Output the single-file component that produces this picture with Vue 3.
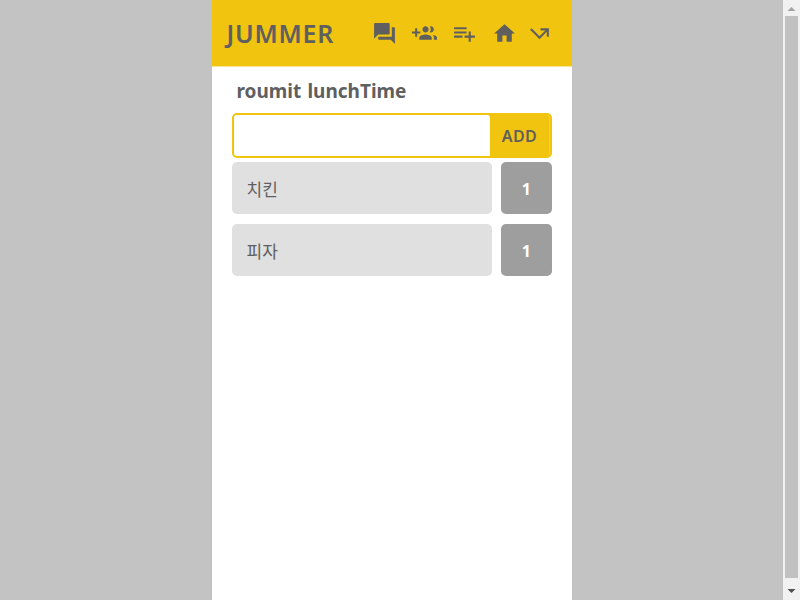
<script setup>
import { ref } from 'vue'

const draft = ref('')
const menus = ref([
  { name: '치킨', votes: 1 },
  { name: '피자', votes: 1 },
])

const actions = [
  { label: 'chat', path: 'M21 6h-2v9H6v2c0 .55.45 1 1 1h11l4 4V7c0-.55-.45-1-1-1zm-4 6V3c0-.55-.45-1-1-1H3c-.55 0-1 .45-1 1v14l4-4h10c.55 0 1-.45 1-1z' },
  { label: 'invite', path: 'M8 10H5V7H3v3H0v2h3v3h2v-3h3v-2zm10 1c1.66 0 2.99-1.34 2.99-3S19.66 5 18 5c-.32 0-.63.05-.91.14.57.81.9 1.79.9 2.86s-.34 2.04-.9 2.86c.28.09.59.14.91.14zm-5 0c1.66 0 2.99-1.34 2.99-3S14.66 5 13 5c-1.66 0-3 1.34-3 3s1.34 3 3 3zm6.62 2.16c.83.73 1.38 1.66 1.38 2.84v2h3v-2c0-1.54-2.37-2.49-4.38-2.84zM13 13c-2 0-6 1-6 3v2h12v-2c0-2-4-3-6-3z' },
  { label: 'new list', path: 'M14 10H2v2h12v-2zm0-4H2v2h12V6zm4 8v-4h-2v4h-4v2h4v4h2v-4h4v-2h-4zM2 16h8v-2H2v2z' },
  { label: 'home', path: 'M10 20v-6h4v6h5v-8h3L12 3 2 12h3v8z' },
  { label: 'leave', path: 'M3 8.41l9 9 7-7V15h2V7h-8v2h4.59L12 14.59 4.41 7 3 8.41z' },
]

function addMenu() {
  const name = draft.value.trim()
  if (!name) return
  menus.value.push({ name, votes: 0 })
  draft.value = ''
}
</script>

<template>
  <div class="page">
    <div class="stage">
      <main class="phone">
        <header class="bar">
          <h1 class="brand">JUMMER</h1>
          <nav class="actions">
            <a v-for="a in actions" :key="a.label" class="action">
              <svg viewBox="0 0 24 24" width="25" height="25"><path :d="a.path" /></svg>
            </a>
          </nav>
        </header>
        <section class="room">
          <h2 class="title">roumit lunchTime</h2>
          <form class="entry" @submit.prevent="addMenu">
            <input v-model="draft" class="field" type="text" />
            <button class="add" type="submit">ADD</button>
          </form>
          <ul class="menus">
            <li v-for="m in menus" :key="m.name" class="menu">
              <span class="name">{{ m.name }}</span>
              <button class="votes" type="button" @click="m.votes++">{{ m.votes }}</button>
            </li>
          </ul>
        </section>
      </main>
    </div>
    <div class="scroll">
      <svg class="arrow" viewBox="0 0 17 16" width="17" height="16"><path fill="#a3a3a3" d="M4.5 11 8.5 7l4 4z" /></svg>
      <div class="thumb"></div>
      <svg class="arrow end" viewBox="0 0 17 22" width="17" height="22"><path fill="#505050" d="M4.5 11h8l-4 4z" /></svg>
    </div>
  </div>
</template>

<style>
body {
  margin: 0;
  overflow: hidden;
}
</style>

<style scoped>
.page {
  display: flex;
  height: 100vh;
  font-family: "Noto Sans", "Noto Sans CJK KR", sans-serif;
  color: #5f5f5f;
  background: #c3c3c3;
}
.stage {
  flex: 1;
  display: flex;
  justify-content: center;
}
.phone {
  width: 360px;
  background: #fff;
}
.bar {
  box-sizing: border-box;
  height: 67px;
  display: flex;
  align-items: center;
  justify-content: space-between;
  padding: 0 20px 0 15px;
  background: #f1c40f;
  border-bottom: 1px solid #f9e595;
}
.brand {
  margin: 0;
  font-size: 25px;
  font-weight: 600;
  line-height: 34px;
  letter-spacing: 0.8px;
}
.actions {
  display: flex;
  gap: 15px;
}
.action {
  display: flex;
}
.action:last-child {
  margin-left: -5px;
}
.action svg {
  fill: #5f5f5f;
}
.room {
  padding: 10px 20px 0;
}
.title {
  margin: 0;
  padding-left: 5px;
  height: 36px;
  font-size: 19px;
  font-weight: 700;
  line-height: 28px;
  word-spacing: 1.2px;
}
.entry {
  box-sizing: border-box;
  display: flex;
  height: 44.5px;
  border: 2px solid #f1c40f;
  border-radius: 5px;
  background: #f1c40f;
}
.field {
  box-sizing: border-box;
  width: 256px;
  padding: 0 10px;
  border: 0;
  border-radius: 3px 3px 0 3px;
  outline: none;
  background: #fff;
  font: inherit;
}
.add {
  flex: 1;
  padding: 2px 0 0 1px;
  border: 0;
  border-right: 1px solid #f4d03b;
  border-radius: 3px;
  background: #f1c40f;
  color: #5f5f5f;
  font: 600 16px/24px "Noto Sans", sans-serif;
  letter-spacing: 0.4px;
}
.menus {
  display: grid;
  gap: 10px;
  margin: 4.8px 0 0;
  padding: 0;
  list-style: none;
}
.menu {
  display: flex;
  justify-content: space-between;
  height: 52px;
}
.name {
  box-sizing: border-box;
  width: 260px;
  padding: 2px 0 0 15px;
  border-radius: 5px;
  background: #e0e0e0;
  font-size: 17px;
  line-height: 52px;
}
.votes {
  width: 50.5px;
  padding: 2px 0 0;
  border: 0;
  border-radius: 5px;
  background: #9e9e9e;
  color: #fff;
  font: 700 16px/24px "Noto Sans", sans-serif;
}
.scroll {
  box-sizing: border-box;
  width: 17px;
  display: flex;
  flex-direction: column;
  background: #f1f1f1;
}
.arrow {
  display: block;
}
.thumb {
  flex: 1;
  margin: 0 2px;
  background: #c1c1c1;
}
</style>
